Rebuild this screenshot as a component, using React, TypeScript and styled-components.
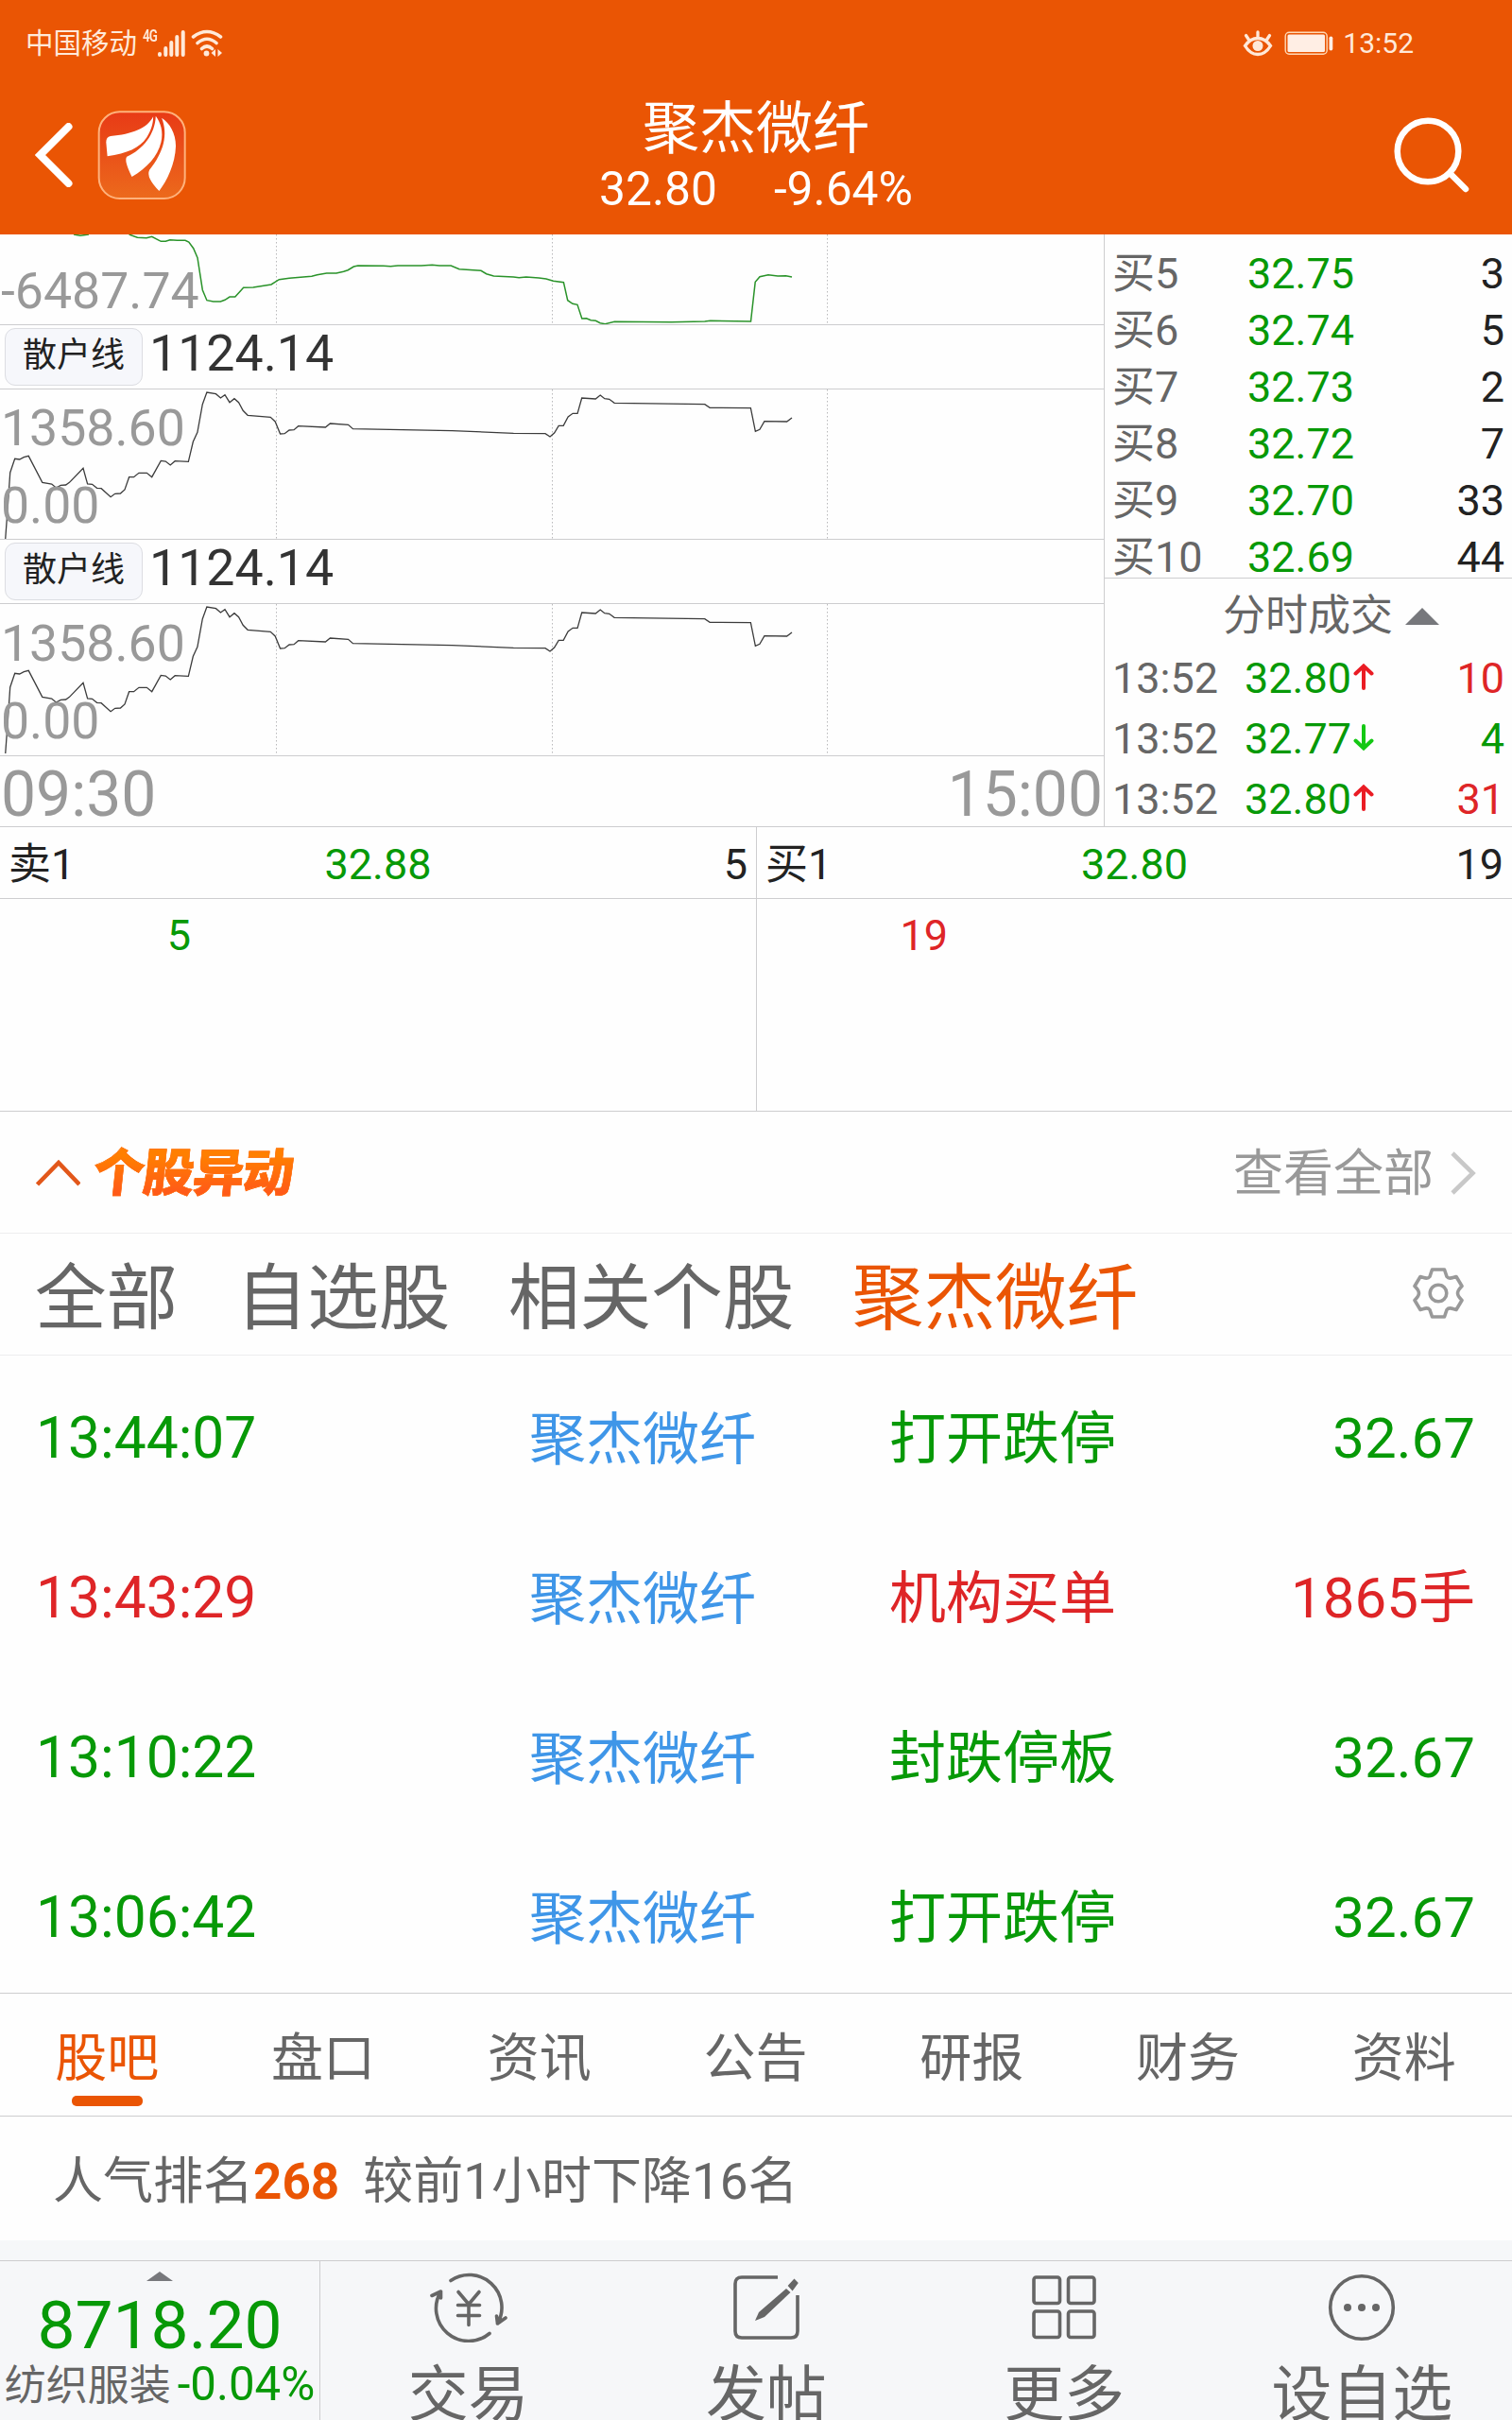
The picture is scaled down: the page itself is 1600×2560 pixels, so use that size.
import React from "react";
import styled, { createGlobalStyle } from "styled-components";

const GREEN = "#079907";
const RED = "#de2527";
const ORANGE = "#ea5504";
const GREY = "#666666";
const LINE = "#cdcdcf";

const GlobalStyle = createGlobalStyle`
  * { box-sizing: border-box; }
  body {
    margin: 0;
    background: #fff;
    font-family: Roboto, "Noto Sans CJK SC", sans-serif;
    color: #222;
  }
  svg { display: block; flex: none; }
`;

const Page = styled.div`
  width: 1600px;
  height: 2560px;
  overflow: hidden;
  display: flex;
  flex-direction: column;
  background: #fefefe;
  white-space: nowrap;
  > * { flex: none; }
`;

/* header */

const Header = styled.header`
  height: 248px;
  background: ${ORANGE};
  color: #fff;
`;

const StatusBar = styled.div`
  height: 84px;
  padding: 8px 104px 0 27px;
  display: flex;
  align-items: center;
  justify-content: space-between;
  color: #ffe9d9;
  font-size: 30px;
  line-height: 40px;
`;

const StatusGroup = styled.div`
  display: flex;
  align-items: center;
`;

const Carrier = styled.span`
  font-size: 29.5px;
`;

const NetworkType = styled.span`
  align-self: flex-start;
  margin: 3px 0 0 6px;
  width: 15px;
  font-size: 18px;
  font-weight: 600;
  line-height: 18px;
  letter-spacing: -1px;
  transform: scaleX(0.74);
  transform-origin: left;
`;

const Nav = styled.div`
  height: 160px;
  display: grid;
  grid-template-columns: 1fr auto 1fr;
  align-items: center;
`;

const NavLeft = styled.div`
  display: flex;
  align-items: center;
  gap: 26px;
  padding: 0 0 1px 37px;
`;

const NavRight = styled.div`
  display: flex;
  justify-content: flex-end;
  padding: 0 44px 1px 0;
`;

const StockHeading = styled.div`
  display: flex;
  flex-direction: column;
  align-items: center;
`;

const StockName = styled.h1`
  margin: 0;
  padding-top: 2px;
  font-size: 60px;
  font-weight: 400;
  line-height: 70px;
`;

const StockQuote = styled.div`
  display: flex;
  gap: 60px;
  font-size: 49.7px;
  line-height: 56px;
`;

/* charts and order book */

const Market = styled.section`
  height: 627px;
  display: flex;
  border-bottom: 1px solid ${LINE};
`;

const Charts = styled.div`
  width: 1168px;
  display: flex;
  flex-direction: column;
`;

const Panel = styled.div<{ $height: number }>`
  height: ${(p) => p.$height}px;
  display: grid;
  overflow: hidden;
  border-bottom: 1px solid ${LINE};
  > * { grid-area: 1 / 1; }
`;

const AxisLabels = styled.div<{ $top: number }>`
  padding: ${(p) => p.$top}px 0 0 1px;
  display: flex;
  flex-direction: column;
  gap: 22px;
  font-size: 53.6px;
  line-height: 60px;
  color: #999;
`;

const IndicatorRow = styled.div`
  height: 68px;
  padding: 3px 0 0 5px;
  display: flex;
  align-items: flex-start;
  gap: 7px;
  border-bottom: 1px solid ${LINE};
`;

const IndicatorButton = styled.button`
  width: 146px;
  height: 61px;
  padding: 0 0 4px;
  border: 1px solid #dcdde2;
  border-radius: 11px;
  background: #f6f7fb;
  color: #222;
  font: inherit;
  font-size: 36px;
  line-height: 50px;
`;

const IndicatorValue = styled.span`
  font-size: 53.7px;
  line-height: 54px;
  color: #333;
`;

const TimeAxis = styled.div`
  height: 74px;
  padding: 3px 1px 0;
  display: flex;
  justify-content: space-between;
  font-size: 66px;
  line-height: 76px;
  color: #999;
`;

const Book = styled.div`
  flex: 1;
  display: flex;
  flex-direction: column;
  border-left: 1px solid ${LINE};
  font-size: 45px;
`;

const BookLevels = styled.div`
  flex: none;
  height: 364px;
  display: flex;
  flex-direction: column;
  justify-content: flex-start;
  padding-top: 11px;
  border-bottom: 1px solid ${LINE};
`;

const BookRow = styled.div<{ $last?: boolean }>`
  flex: none;
  height: ${(p) => (p.$last ? 52 : 60)}px;
  padding: 0 8px 0 8px;
  display: grid;
  grid-template-columns: 143px 1fr auto;
  line-height: 61px;
`;

const Cell = styled.span<{ $color?: string }>`
  color: ${(p) => p.$color || "#222"};
`;

const TradesTitle = styled.div`
  flex: none;
  height: 73px;
  padding: 6px 0 0 125px;
  display: flex;
  align-items: center;
  gap: 13px;
  color: ${GREY};
  line-height: 60px;
`;

const TradeRow = styled.div`
  flex: none;
  height: 64px;
  padding: 0 8px 0 8px;
  display: grid;
  grid-template-columns: 140px 1fr auto;
  line-height: 66px;
`;

const TradePrice = styled.span`
  display: flex;
  gap: 2px;
  color: ${GREEN};
  svg { margin-top: 17px; }
`;

/* best bid / ask */

const Best = styled.section`
  height: 301px;
  display: grid;
  grid-template-columns: 800px 800px;
  border-bottom: 1px solid ${LINE};
  font-size: 45px;
`;

const BestSide = styled.div`
  & + & { border-left: 1px solid ${LINE}; }
`;

const BestHead = styled.div`
  height: 76px;
  padding: 1px 9px 0 9px;
  display: grid;
  grid-template-columns: 1fr auto 1fr;
  line-height: 78px;
  border-bottom: 1px solid ${LINE};
  > :last-child { text-align: right; }
`;

const QueueItem = styled.div<{ $color: string }>`
  width: 202px;
  text-align: right;
  line-height: 78px;
  color: ${(p) => p.$color};
`;

/* unusual movements */

const MoveHead = styled.div`
  height: 129px;
  padding: 4px 38px 0 37px;
  display: flex;
  align-items: center;
  border-bottom: 1px solid #ededef;
  svg { margin-top: -3px; }
`;

const MoveTitle = styled.h2`
  margin: 0 auto 0 14px;
  font-size: 54px;
  font-weight: 900;
  line-height: 64px;
  letter-spacing: -1.3px;
  color: transparent;
  background: linear-gradient(#ff7f00 20%, #ff5a18 80%);
  background-clip: text;
  -webkit-background-clip: text;
  -webkit-text-stroke: 0.6px #ff6c0c;
  transform: skewX(-6deg);
`;

const ViewAll = styled.a`
  margin-right: 17px;
  font-size: 53px;
  line-height: 64px;
  color: #999;
`;

const FilterTabs = styled.div`
  height: 129px;
  padding: 10px 51px 0 37px;
  display: flex;
  align-items: center;
  gap: 61.5px;
  border-bottom: 1px solid #ededef;
  svg { margin: -12px 0 0 auto; }
`;

const FilterTab = styled.span<{ $active?: boolean }>`
  font-size: 75.6px;
  line-height: 100px;
  color: ${(p) => (p.$active ? ORANGE : GREY)};
`;

const MoveList = styled.div`
  height: 675px;
  padding-top: 3px;
  overflow: hidden;
  border-bottom: 1px solid ${LINE};
`;

const MoveRow = styled.div<{ $color: string }>`
  height: 169px;
  padding: 0 39px 0 38px;
  display: grid;
  grid-template-columns: 522px 381px 1fr auto;
  font-size: 60px;
  line-height: 172px;
  color: ${(p) => p.$color};
`;

const MoveTime = styled.span`
  font-size: 60.5px;
  line-height: 170px;
`;

const MoveStock = styled.span`
  color: #3f96e8;
  line-height: 173px;
`;

const MoveValue = styled.span`
  line-height: 170px;
`;

/* info tabs */

const InfoTabs = styled.nav`
  height: 130px;
  margin-left: -1px;
  display: grid;
  grid-template-columns: repeat(7, 1fr);
  border-bottom: 1px solid ${LINE};
`;

const InfoTab = styled.span<{ $active?: boolean }>`
  padding-top: 33px;
  display: flex;
  flex-direction: column;
  align-items: center;
  font-size: 55px;
  line-height: 70px;
  color: ${(p) => (p.$active ? ORANGE : GREY)};
  &::after {
    content: "";
    width: 75px;
    height: 11px;
    margin-top: 5px;
    border-radius: 5px;
    background: ${(p) => (p.$active ? ORANGE : "transparent")};
  }
`;

const Ranking = styled.p`
  margin: 0;
  height: 131px;
  padding: 3px 0 0 56px;
  font-size: 53px;
  line-height: 133px;
  color: ${GREY};
`;

const Rank = styled.b`
  margin-right: 25px;
  color: ${ORANGE};
`;

/* bottom bar */

const Footer = styled.footer`
  height: 190px;
  padding-top: 21px;
  background: #f6f7f9;
`;

const FooterBar = styled.div`
  height: 169px;
  display: grid;
  grid-template-columns: 339px repeat(4, 1fr);
  border-top: 1px solid ${LINE};
  overflow: hidden;
`;

const Sector = styled.div`
  padding-top: 11px;
  display: flex;
  flex-direction: column;
  align-items: center;
  border-right: 1px solid ${LINE};
`;

const SectorIndex = styled.div`
  margin-top: 7px;
  font-size: 71.3px;
  line-height: 80px;
  color: ${GREEN};
`;

const SectorChange = styled.div`
  margin-top: 0;
  display: flex;
  gap: 7px;
  font-size: 44px;
  line-height: 48px;
  color: ${GREY};
`;

const Percent = styled.span`
  font-size: 49.2px;
  line-height: 45px;
  color: ${GREEN};
`;

const Action = styled.div`
  padding: 12px 2px 0 0;
  display: flex;
  flex-direction: column;
  align-items: center;
  font-size: 64px;
  line-height: 76px;
  color: ${GREY};
  svg { margin-bottom: 18px; }
`;

/* drawings */

const Signal = () => (
  <svg width="31" height="30" viewBox="0 0 31 30" stroke="#ffe9d9" strokeWidth="4" strokeLinecap="round">
    <path d="M3 26v1M9.3 20v7M15.3 14v13M21.3 8v19M27.7 3v24" />
  </svg>
);

const Wifi = () => (
  <svg width="34" height="30" viewBox="0 0 34 30" fill="none" stroke="#ffe9d9" strokeWidth="3.6" strokeLinecap="round">
    <path d="M2.5 8Q17 -3 31.500 8M7 14.500Q17 6 27 14.500M11.500 20.500Q17 15.500 22.500 20.500" />
    <circle cx="16.500" cy="25.500" r="2.900" fill="#ffe9d9" stroke="none" />
    <path d="M26 21v8l-4.500-4zM28.500 21v8l4.500-4z" fill="#ffe9d9" stroke="none" />
  </svg>
);

const Eye = () => (
  <svg width="32" height="30" viewBox="0 0 32 30" fill="none" stroke="#ffe9d9" strokeWidth="3.300" strokeLinecap="round">
    <path d="M2.500 17.500Q8 9.500 16 9.500T29.500 17.500Q24 26.500 16 26.500T2.500 17.500ZM16 8V3M6.500 11L3.500 6.500M25.500 11L28.500 6.500" />
    <circle cx="16" cy="17.500" r="5.500" fill="#ffe9d9" stroke="none" />
  </svg>
);

const Battery = () => (
  <svg width="52" height="26" viewBox="0 0 52 26">
    <rect x="1.200" y="1.200" width="44" height="23" rx="4" fill="none" stroke="#ffd9b5" strokeWidth="1.400" />
    <rect x="3.500" y="3.500" width="39.500" height="18.500" rx="1.500" fill="#ffeee4" />
    <rect x="47.500" y="5.500" width="3.800" height="15" rx="1.800" fill="#ffeee4" />
  </svg>
);

const Back = () => (
  <svg width="40" height="68" viewBox="0 0 40 68" fill="none" stroke="#fff" strokeWidth="8" strokeLinecap="round">
    <path d="M35.500 4L5.500 34L35.500 64" />
  </svg>
);

const Logo = () => (
  <svg width="94" height="94" viewBox="311 349 281 283">
    <defs>
      <linearGradient id="logoFill" x1="0" y1="0" x2="0" y2="1">
        <stop offset="0" stopColor="#e83a16" />
        <stop offset="1" stopColor="#ec6a1c" />
      </linearGradient>
    </defs>
    <rect x="315" y="353" width="274" height="276" rx="66" fill="url(#logoFill)" stroke="#ffb27c" strokeWidth="6" />
    <g fill="#fff">
      <path d="M488 368C470 405 420 425 352 430Q338 432 338 450L342 494C405 486 445 468 467 435C481 412 488 392 488 368Z" />
      <path d="M496 366C494 425 455 472 404 496Q394 508 420 560C468 532 502 495 513 450C521 415 512 388 496 366Z" />
      <path d="M515 372C536 425 522 480 476 538Q464 562 507 605C532 572 558 520 560 462C560 420 540 388 515 372Z" />
    </g>
  </svg>
);

const Search = () => (
  <svg width="82" height="82" viewBox="0 0 82 82" fill="none" stroke="#fff" strokeWidth="6.500" strokeLinecap="round">
    <circle cx="37" cy="37" r="32.300" />
    <path d="M61 61L77 77" />
  </svg>
);

const Grid = ({ height }: { height: number }) => (
  <path d={`M292.500 0V${height}M584.500 0V${height}M875.500 0V${height}`} stroke="#b9b9bb" strokeWidth="1" strokeDasharray="1.500 2.500" />
);

const FlowChart = () => (
  <svg width="1168" height="95" fill="none">
    <Grid height={95} />
    <path
      d="M78 0L85 1.300L94 0M136.600 0L145.400 3.300L155 3.700L160.700 2.300L170.300 7.300H175.300L179.900 5.700L187.500 6.300H196L199.800 8L204.700 14.700L209 24.700L214.300 58.700L218.900 69.700L225.800 71H233.400L238 69.300L243 66H248.800L257.600 56.300L267.900 56L287 53L295.400 47.700L306.200 46.300L329.900 44.300L335.600 42.700L345.600 41H355.900L363.600 39.300L368.200 37.700L374.300 34L378.900 33L405.700 33.300L413.300 33.700L421 33H445.800L457.300 32.300L465 33H477.200L486 36.700L509 38.300L514.700 41.700L522.400 44L543.400 45L549.200 45.700L556.800 45L570.200 46L577.900 47L585.500 49.300L596.400 50.700L600.700 69.700L605.900 73.300L611 74.300L615.800 89L620.500 88.700L625.200 90.700L630.400 91.300L635.100 93.700L640.300 94.700L650.200 92.300L710.300 92.700L745.800 92L751.800 91.300L794.500 92L799.200 50.300L804 44.700L813 42.700L823 44L831.600 43.700L838 45"
      stroke="#2a932a"
      strokeWidth="1.500"
    />
  </svg>
);

const RETAIL_LINE =
  "15,990 22,880 28,780 41,736 54,738 66,731 79,727 117,811 143,816 155,828 168,820 182,819 192,811 230,766 242,816 255,817 268,829 280,830 306,857 318,847 333,846 345,834 357,794 370,794 384,781 406,781 420,794 445,742 458,744 471,756 484,743 521,745 534,682 546,652 560,563 572,525 597,530 610,543 622,533 635,557 648,545 660,557 672,583 685,598 748,604 761,618 775,657 787,656 800,645 813,644 825,632 900,636 913,624 963,628 976,641 1250,647 1420,655 1508,656 1521,666 1533,654 1545,631 1558,631 1571,603 1584,592 1597,592 1609,543 1647,546 1660,534 1672,545 1685,547 1699,559 1949,563 1963,574 2076,575 2089,649 2101,643 2114,617 2176,618 2190,606";

const RetailChart = ({ height }: { height: number }) => (
  <svg width="1168" height={height} fill="none">
    <Grid height={height} />
    <polyline
      points={RETAIL_LINE}
      transform="scale(0.38265 0.33333) translate(0 -516)"
      stroke="#3c3c3c"
      strokeWidth="1.300"
      vectorEffect="non-scaling-stroke"
    />
  </svg>
);

const Arrow = ({ up }: { up: boolean }) => (
  <svg width="22" height="28" viewBox="0 0 22 28" fill="none" stroke={up ? "#ea1c24" : "#14c814"} strokeWidth="4" strokeLinecap="round">
    <path d={up ? "M11 26V3M2.500 10.500L11 2.500L19.500 10.500" : "M11 2V25M2.500 17.500L11 25.500L19.500 17.500"} />
  </svg>
);

const Triangle = ({ width, height }: { width: number; height: number }) => (
  <svg width={width} height={height} viewBox="0 0 36 18" preserveAspectRatio="none">
    <path d="M0 18L18 0L36 18Z" fill="#77787c" />
  </svg>
);

const ChevronUp = () => (
  <svg width="48" height="30" viewBox="0 0 48 30" fill="none" stroke="#e2571a" strokeWidth="4.600">
    <path d="M2.500 27L25 4L47 27" />
  </svg>
);

const ChevronRight = () => (
  <svg width="28" height="46" viewBox="0 0 28 46" fill="none" stroke="#c8c8c8" strokeWidth="4.600">
    <path d="M3 2L24.500 23L3 44" />
  </svg>
);

const Gear = () => (
  <svg width="54" height="56" viewBox="0 0 54 56" fill="none" stroke="#999" strokeWidth="3.600" strokeLinejoin="round">
    <path d="M20.500 3H33.500L36 10.500Q38 13 42.500 11.500L46 10.500L52 20.500Q47.500 25 47.500 28T52 35.500L46 45.500L42.500 44.500Q38 43 36 45.500L33.500 53H20.500L18 45.500Q16 43 11.500 44.500L8 45.500L2 35.500Q6.500 31 6.500 28T2 20.500L8 10.500L11.500 11.500Q16 13 18 10.500Z" />
    <circle cx="27" cy="28" r="8.800" />
  </svg>
);

const TradeIcon = () => (
  <svg width="82" height="74" viewBox="0 0 82 74" fill="none" stroke="#666" strokeWidth="3.600" strokeLinecap="round" strokeLinejoin="round">
    <path d="M22 8.500A34.500 34.500 0 0 1 71.500 54L80 48M71.500 54L70.500 46" />
    <path d="M63 64.500A34.500 34.500 0 0 1 11.500 20L2 24.500M11.500 20V27" />
    <path d="M30 20.500L41 33.500L52 20.500M41 33.500V55.500M29.500 34.500H52.500M29.500 45.500H52.500" />
  </svg>
);

const PostIcon = () => (
  <svg width="72" height="74" viewBox="0 0 72 74" fill="none" stroke="#666" strokeWidth="3.600">
    <path d="M48 5H10Q3 5 3 12V62Q3 69 10 69H62Q69 69 69 62V24" />
    <path d="M57 17L61.500 21L34 47L24 51L28 42Z" fill="#666" stroke="none" />
    <path d="M60 14L65.500 8L68.500 11L63.500 18Z" fill="#666" strokeWidth="2" />
  </svg>
);

const MoreIcon = () => (
  <svg width="70" height="74" viewBox="0 0 70 74" fill="none" stroke="#666" strokeWidth="3.600">
    <rect x="3" y="5" width="27.500" height="27.500" rx="2.500" />
    <rect x="39.500" y="5" width="27.500" height="27.500" rx="2.500" />
    <rect x="3" y="41" width="27.500" height="27.500" rx="2.500" />
    <rect x="39.500" y="41" width="27.500" height="27.500" rx="2.500" />
  </svg>
);

const WatchIcon = () => (
  <svg width="74" height="74" viewBox="0 0 74 74" fill="none" stroke="#666" strokeWidth="3.600">
    <circle cx="37" cy="37" r="33.300" />
    <g fill="#666" stroke="none">
      <circle cx="22" cy="37" r="4" />
      <circle cx="37" cy="37" r="4" />
      <circle cx="52" cy="37" r="4" />
    </g>
  </svg>
);

/* data */

const levels = [
  ["买5", "32.75", "3"],
  ["买6", "32.74", "5"],
  ["买7", "32.73", "2"],
  ["买8", "32.72", "7"],
  ["买9", "32.70", "33"],
  ["买10", "32.69", "44"],
];

const trades = [
  { time: "13:52", price: "32.80", up: true, qty: "10" },
  { time: "13:52", price: "32.77", up: false, qty: "4" },
  { time: "13:52", price: "32.80", up: true, qty: "31" },
];

const moves = [
  { time: "13:44:07", type: "打开跌停", value: "32.67", color: GREEN },
  { time: "13:43:29", type: "机构买单", value: "1865手", color: RED },
  { time: "13:10:22", type: "封跌停板", value: "32.67", color: GREEN },
  { time: "13:06:42", type: "打开跌停", value: "32.67", color: GREEN },
];

const filters = ["全部", "自选股", "相关个股", "聚杰微纤"];
const infoTabs = ["股吧", "盘口", "资讯", "公告", "研报", "财务", "资料"];

const actions = [
  { label: "交易", icon: <TradeIcon /> },
  { label: "发帖", icon: <PostIcon /> },
  { label: "更多", icon: <MoreIcon /> },
  { label: "设自选", icon: <WatchIcon /> },
];

const Indicator = () => (
  <IndicatorRow>
    <IndicatorButton>散户线</IndicatorButton>
    <IndicatorValue>1124.14</IndicatorValue>
  </IndicatorRow>
);

const StatusRight = styled(StatusGroup)`
  gap: 11px;
  svg + svg { margin: 0 -1px 0 1px; }
`;

const SignalGroup = styled(StatusGroup)`
  svg + svg { margin-left: 5px; }
`;

export default function App() {
  return (
    <Page>
      <GlobalStyle />
      <Header>
        <StatusBar>
          <SignalGroup>
            <Carrier>中国移动</Carrier>
            <NetworkType>4G</NetworkType>
            <Signal />
            <Wifi />
          </SignalGroup>
          <StatusRight>
            <Eye />
            <Battery />
            <span>13:52</span>
          </StatusRight>
        </StatusBar>
        <Nav>
          <NavLeft>
            <Back />
            <Logo />
          </NavLeft>
          <StockHeading>
            <StockName>聚杰微纤</StockName>
            <StockQuote>
              <span>32.80</span>
              <span>-9.64%</span>
            </StockQuote>
          </StockHeading>
          <NavRight>
            <Search />
          </NavRight>
        </Nav>
      </Header>

      <Market>
        <Charts>
          <Panel $height={96}>
            <FlowChart />
            <AxisLabels $top={30}>
              <span>-6487.74</span>
            </AxisLabels>
          </Panel>
          <Indicator />
          <Panel $height={159}>
            <RetailChart height={158} />
            <AxisLabels $top={11}>
              <span>1358.60</span>
              <span>0.00</span>
            </AxisLabels>
          </Panel>
          <Indicator />
          <Panel $height={161}>
            <RetailChart height={160} />
            <AxisLabels $top={11.5}>
              <span>1358.60</span>
              <span>0.00</span>
            </AxisLabels>
          </Panel>
          <TimeAxis>
            <span>09:30</span>
            <span>15:00</span>
          </TimeAxis>
        </Charts>
        <Book>
          <BookLevels>
            {levels.map(([label, price, qty], i) => (
              <BookRow key={label} $last={i === levels.length - 1}>
                <Cell $color={GREY}>{label}</Cell>
                <Cell $color={GREEN}>{price}</Cell>
                <Cell>{qty}</Cell>
              </BookRow>
            ))}
          </BookLevels>
          <TradesTitle>
            <span>分时成交</span>
            <Triangle width={36} height={18} />
          </TradesTitle>
          {trades.map((t, i) => (
            <TradeRow key={i}>
              <Cell $color={GREY}>{t.time}</Cell>
              <TradePrice>
                {t.price}
                <Arrow up={t.up} />
              </TradePrice>
              <Cell $color={t.up ? RED : GREEN}>{t.qty}</Cell>
            </TradeRow>
          ))}
        </Book>
      </Market>

      <Best>
        <BestSide>
          <BestHead>
            <Cell>卖1</Cell>
            <Cell $color={GREEN}>32.88</Cell>
            <Cell>5</Cell>
          </BestHead>
          <QueueItem $color={GREEN}>5</QueueItem>
        </BestSide>
        <BestSide>
          <BestHead>
            <Cell>买1</Cell>
            <Cell $color={GREEN}>32.80</Cell>
            <Cell>19</Cell>
          </BestHead>
          <QueueItem $color={RED}>19</QueueItem>
        </BestSide>
      </Best>

      <MoveHead>
        <ChevronUp />
        <MoveTitle>个股异动</MoveTitle>
        <ViewAll>查看全部</ViewAll>
        <ChevronRight />
      </MoveHead>
      <FilterTabs>
        {filters.map((f, i) => (
          <FilterTab key={f} $active={i === 3}>
            {f}
          </FilterTab>
        ))}
        <Gear />
      </FilterTabs>
      <MoveList>
        {moves.map((m) => (
          <MoveRow key={m.time} $color={m.color}>
            <MoveTime>{m.time}</MoveTime>
            <MoveStock>聚杰微纤</MoveStock>
            <span>{m.type}</span>
            <MoveValue>{m.value}</MoveValue>
          </MoveRow>
        ))}
      </MoveList>

      <InfoTabs>
        {infoTabs.map((t, i) => (
          <InfoTab key={t} $active={i === 0}>
            {t}
          </InfoTab>
        ))}
      </InfoTabs>
      <Ranking>
        人气排名<Rank>268</Rank>较前1小时下降16名
      </Ranking>

      <Footer>
        <FooterBar>
          <Sector>
            <Triangle width={28} height={10} />
            <SectorIndex>8718.20</SectorIndex>
            <SectorChange>
              <span>纺织服装</span>
              <Percent>-0.04%</Percent>
            </SectorChange>
          </Sector>
          {actions.map((a) => (
            <Action key={a.label}>
              {a.icon}
              <span>{a.label}</span>
            </Action>
          ))}
        </FooterBar>
      </Footer>
    </Page>
  );
}
